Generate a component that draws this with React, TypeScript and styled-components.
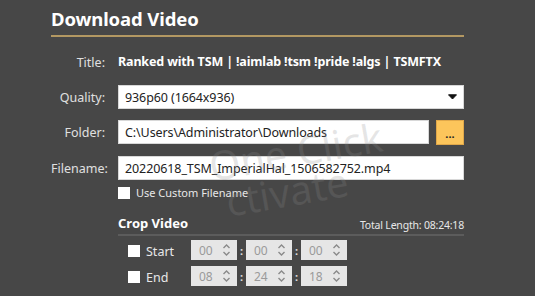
import styled, { createGlobalStyle } from "styled-components"

const GlobalStyle = createGlobalStyle`
  html, body { margin: 0; padding: 0; background: #474747; }
  body { font-family: "Noto Sans", "Open Sans", sans-serif; }
`

const Page = styled.div`
  position: relative;
  width: 535px;
  height: 296px;
  overflow: hidden;
  background: #474747;
  padding: 0 71px 0 51px;
  box-sizing: border-box;
`

const Header = styled.h1`
  margin: 0;
  padding-top: 6px;
  height: 29px;
  font-size: 18.5px;
  font-weight: 700;
  color: #fff;
  line-height: 26px;
  letter-spacing: -0.1px;
  border-bottom: 2px solid #b39862;
`

const Form = styled.div`
  display: grid;
  grid-template-columns: 54px 1fr;
  column-gap: 13px;
  row-gap: 11px;
  align-items: center;
  margin-top: 13px;
`

const Label = styled.div`
  text-align: right;
  font-size: 12.5px;
  color: #e0e0e0;
`

const Value = styled.div`
  font-size: 12.5px;
  font-weight: 700;
  color: #fff;
  white-space: nowrap;
  height: 24px;
  line-height: 24px;
  letter-spacing: -0.15px;
`

const Field = styled.div`
  height: 24px;
  box-sizing: border-box;
  background: #fff;
  border: 1px solid #d8d8d8;
  display: flex;
  align-items: center;
  padding: 0 6px;
  font-size: 12.5px;
  color: #222;
  white-space: nowrap;
  letter-spacing: -0.1px;
`

const Select = styled(Field)`
  justify-content: space-between;
  padding-right: 6px;
`

const FolderRow = styled.div`
  display: flex;
  gap: 7px;
`

const BrowseButton = styled.div`
  width: 28px;
  height: 25px;
  flex: none;
  background: #fcc55b;
  border: 1px solid #e0a84a;
  box-sizing: border-box;
  display: flex;
  align-items: flex-end;
  justify-content: center;
  padding-bottom: 6px;
  font-size: 11px;
  font-weight: 700;
  color: #222;
  line-height: 8px;
`

const CheckRow = styled.div`
  grid-column: 2;
  display: flex;
  align-items: center;
  gap: 6px;
  margin-top: -6px;
  font-size: 11px;
  color: #e8e8e8;
`

const Box = styled.span<{ $size: number }>`
  width: ${(p) => p.$size}px;
  height: ${(p) => p.$size}px;
  background: #fff;
  flex: none;
`

const Crop = styled.div`
  margin-left: 67px;
  margin-top: 14px;
`

const CropHeader = styled.div`
  display: flex;
  justify-content: space-between;
  align-items: flex-end;
  padding-bottom: 2px;
  border-bottom: 2px solid #5c5c5c;
`

const CropTitle = styled.div`
  font-size: 13px;
  font-weight: 700;
  color: #fff;
`

const Total = styled.div`
  font-size: 10.5px;
  color: #e8e8e8;
  letter-spacing: -0.2px;
`

const TimeRows = styled.div`
  display: flex;
  flex-direction: column;
  gap: 6px;
  padding: 4px 0 0 10px;
`

const TimeRow = styled.div`
  display: flex;
  align-items: center;
`

const TimeLabel = styled.div`
  width: 63px;
  display: flex;
  align-items: center;
  gap: 6px;
  font-size: 12.5px;
  color: #e8e8e8;
  margin-top: 2px;
`

const Spinner = styled.div`
  width: 46px;
  height: 20px;
  background: #e6e6e6;
  display: flex;
  align-items: center;
  justify-content: space-between;
  padding: 0 6px 0 8px;
  box-sizing: border-box;
  font-size: 12px;
  color: #9a9a9a;
`

const Colon = styled.span`
  width: 9px;
  text-align: center;
  font-size: 11px;
  font-weight: 700;
  color: #ddd;
`

const Watermark = styled.div`
  position: absolute;
  left: 206px;
  top: 148px;
  font-size: 40px;
  line-height: 38px;
  color: rgba(140, 140, 140, 0.22);
  transform: rotate(-10deg);
  transform-origin: left top;
  pointer-events: none;
  white-space: nowrap;
`

const Arrows = () => (
  <svg width="9" height="14" viewBox="0 0 9 14" fill="none" stroke="#8a8a8a" strokeWidth="1.4">
    <path d="M1.5 5 L4.5 2 L7.5 5" />
    <path d="M1.5 9 L4.5 12 L7.5 9" />
  </svg>
)

const Chevron = () => (
  <svg width="9" height="6" viewBox="0 0 9 6">
    <path d="M0.5 0.8 L4.5 5 L8.5 0.8 Z" fill="#111" stroke="#111" strokeWidth="1" strokeLinejoin="round" />
  </svg>
)

const times = [
  { label: "Start", parts: ["00", "00", "00"] },
  { label: "End", parts: ["08", "24", "18"] },
]

export default function App() {
  return (
    <Page>
      <GlobalStyle />
      <Header>Download Video</Header>
      <Form>
        <Label>Title:</Label>
        <Value>Ranked with TSM | !aimlab !tsm !pride !algs | TSMFTX</Value>
        <Label>Quality:</Label>
        <Select>
          936p60 (1664x936)
          <Chevron />
        </Select>
        <Label>Folder:</Label>
        <FolderRow>
          <Field style={{ flex: 1 }}>C:\Users\Administrator\Downloads</Field>
          <BrowseButton>...</BrowseButton>
        </FolderRow>
        <Label>Filename:</Label>
        <Field>20220618_TSM_ImperialHal_1506582752.mp4</Field>
        <CheckRow>
          <Box $size={12} />
          Use Custom Filename
        </CheckRow>
      </Form>
      <Crop>
        <CropHeader>
          <CropTitle>Crop Video</CropTitle>
          <Total>Total Length: 08:24:18</Total>
        </CropHeader>
        <TimeRows>
          {times.map((t) => (
            <TimeRow key={t.label}>
              <TimeLabel>
                <Box $size={12} />
                {t.label}
              </TimeLabel>
              {t.parts.map((p, i) => (
                <>
                  {i > 0 && <Colon key={"c" + i}>:</Colon>}
                  <Spinner key={i}>
                    {p}
                    <Arrows />
                  </Spinner>
                </>
              ))}
            </TimeRow>
          ))}
        </TimeRows>
      </Crop>
      <Watermark>
        One Click
        <br />
        &nbsp;ctivate
      </Watermark>
    </Page>
  )
}
